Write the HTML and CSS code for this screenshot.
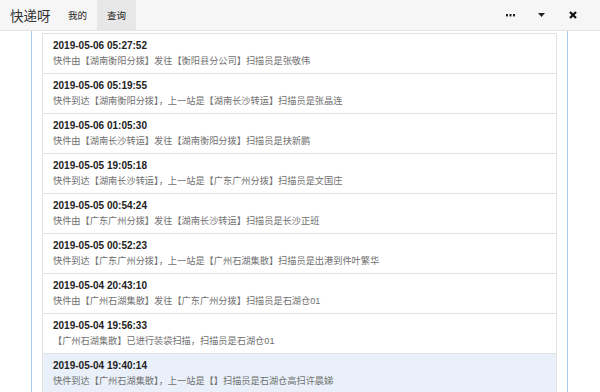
FILE: index.html
```html
<!DOCTYPE html>
<html lang="zh">
<head>
<meta charset="utf-8">
<link rel="stylesheet" href="styles.css">
</head>
<body>
<header class="topbar">
  <div class="brand">快递呀</div>
  <nav class="tabs">
    <span class="tab">我的</span>
    <span class="tab active">查询</span>
  </nav>
  <div class="actions">
    <span class="act dots"><svg width="9" height="3" viewBox="0 0 9 3"><rect x="0" y="0" width="2" height="2.4" fill="#222"/><rect x="3.5" y="0" width="2" height="2.4" fill="#222"/><rect x="7" y="0" width="2" height="2.4" fill="#222"/></svg></span>
    <span class="act caret"><svg width="7" height="4" viewBox="0 0 7 4"><path d="M0 0 H7 L3.5 4 Z" fill="#222"/></svg></span>
    <span class="act close"><svg width="8" height="8" viewBox="0 0 8 8"><path d="M1 1 L7 7 M7 1 L1 7" stroke="#111" stroke-width="2.2"/></svg></span>
  </div>
</header>
<main class="frame">
  <ul class="list">
    <li class="item"><div class="time">2019-05-06 05:27:52</div><div class="desc">快件由【湖南衡阳分拨】发往【衡阳县分公司】扫描员是张敬伟</div></li>
    <li class="item"><div class="time">2019-05-06 05:19:55</div><div class="desc">快件到达【湖南衡阳分拨】，上一站是【湖南长沙转运】扫描员是张晶连</div></li>
    <li class="item"><div class="time">2019-05-06 01:05:30</div><div class="desc">快件由【湖南长沙转运】发往【湖南衡阳分拨】扫描员是扶新鹏</div></li>
    <li class="item"><div class="time">2019-05-05 19:05:18</div><div class="desc">快件到达【湖南长沙转运】，上一站是【广东广州分拨】扫描员是文国庄</div></li>
    <li class="item"><div class="time">2019-05-05 00:54:24</div><div class="desc">快件由【广东广州分拨】发往【湖南长沙转运】扫描员是长沙正班</div></li>
    <li class="item"><div class="time">2019-05-05 00:52:23</div><div class="desc">快件到达【广东广州分拨】，上一站是【广州石湖集散】扫描员是出港到件叶繁华</div></li>
    <li class="item"><div class="time">2019-05-04 20:43:10</div><div class="desc">快件由【广州石湖集散】发往【广东广州分拨】扫描员是石湖仓01</div></li>
    <li class="item"><div class="time">2019-05-04 19:56:33</div><div class="desc">【广州石湖集散】已进行装袋扫描，扫描员是石湖仓01</div></li>
    <li class="item selected"><div class="time">2019-05-04 19:40:14</div><div class="desc">快件到达【广州石湖集散】，上一站是【】扫描员是石湖仓高扫许晨娣</div></li>
  </ul>
</main>
</body>
</html>
```
FILE: styles.css
```css
html, body {
  margin: 0;
  padding: 0;
  background: #ffffff;
  font-family: "Liberation Sans", "Noto Sans CJK SC", sans-serif;
  overflow: hidden;
  height: 392px;
}
.topbar {
  display: flex;
  align-items: stretch;
  height: 30px;
  background: #f6f6f6;
  border-bottom: 1px solid #e4e4e4;
}
.brand {
  display: flex;
  align-items: center;
  padding-left: 10px;
  width: 48px;
  font-size: 13.5px;
  color: #333;
}
.tabs {
  display: flex;
  align-items: stretch;
}
.tab {
  display: flex;
  align-items: center;
  padding: 0 10px;
  font-size: 9.5px;
  color: #222;
}
.tab.active {
  background: #e7e7e7;
}
.actions {
  margin-left: auto;
  display: flex;
  align-items: center;
  padding-right: 12px;
}
.act {
  display: flex;
  align-items: center;
  justify-content: center;
  width: 31px;
  height: 30px;
}
.frame {
  display: block;
  margin-left: 31px;
  width: 515px;
  padding: 2px 10px 0 10px;
  border-left: 1px solid #a8cbea;
  border-right: 1px solid #a8cbea;
  height: 359px;
}
.list {
  list-style: none;
  margin: 0;
  padding: 0;
  border-left: 1px solid #e2e2e2;
  border-right: 1px solid #e2e2e2;
  border-top: 1px solid #e2e2e2;
}
.item {
  height: 40px;
  box-sizing: border-box;
  padding: 5px 0 0 10px;
  border-bottom: 1px solid #e2e2e2;
}
.item.selected {
  background: #e9f0f9;
}
.time {
  font-size: 10px;
  font-weight: bold;
  color: #222;
  line-height: 14px;
}
.desc {
  font-size: 9.2px;
  color: #707070;
  line-height: 16px;
}
```
